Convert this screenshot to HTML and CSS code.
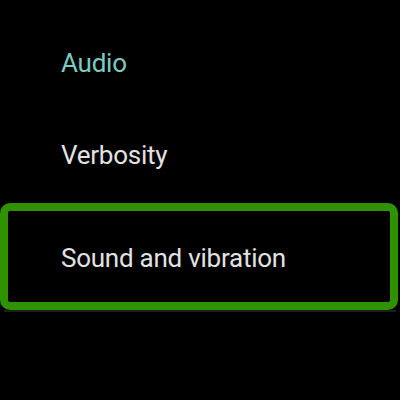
FILE: index.html
```html
<!DOCTYPE html>
<html>
<head>
<meta charset="utf-8">
<link rel="stylesheet" href="styles.css">
</head>
<body>
<div class="list">
  <div class="category">Audio</div>
  <div class="item">Verbosity</div>
  <div class="item focused">Sound and vibration</div>
  <div class="divider"></div>
</div>
</body>
</html>
```
FILE: styles.css
```css
html, body {
  margin: 0;
  padding: 0;
  background: #000;
  width: 400px;
  height: 400px;
  overflow: hidden;
}
.list {
  display: flex;
  flex-direction: column;
  font-family: Roboto, "Noto Sans", sans-serif;
  font-size: 26px;
  line-height: 30px;
  letter-spacing: -0.25px;
}
.category {
  color: #7ccbc1;
  font-weight: 400;
  padding: 48px 0 0 61px;
}
.item {
  color: #e2e2e2;
  padding-left: 61px;
}
.item:not(.focused) {
  margin-top: 62px;
}
.focused {
  margin-top: 33px;
  width: 398px;
  box-sizing: border-box;
  border: 8px solid #2f9200;
  border-radius: 10px;
  padding: 32px 0 29px 53px;
}
.divider {
  height: 2px;
  background: #1e1e1e;
  margin: 0 4px;
}
```
